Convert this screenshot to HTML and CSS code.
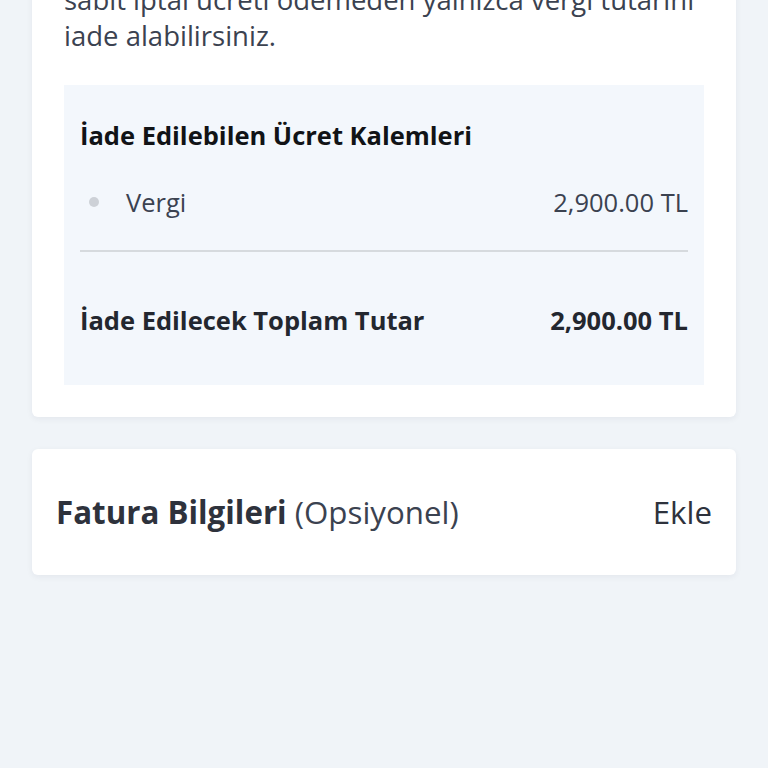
FILE: index.html
```html
<!DOCTYPE html>
<html lang="tr">
<head>
<meta charset="utf-8">
<link rel="stylesheet" href="styles.css">
</head>
<body>
<div class="page">
  <section class="card refund">
    <p class="intro">sabit iptal ücreti ödemeden yalnızca vergi tutarını iade alabilirsiniz.</p>
    <div class="breakdown">
      <h3 class="bd-title">İade Edilebilen Ücret Kalemleri</h3>
      <div class="item">
        <span class="bullet"></span>
        <span class="item-name">Vergi</span>
        <span class="item-amount">2,900.00 TL</span>
      </div>
      <div class="divider"></div>
      <div class="total">
        <span class="total-label">İade Edilecek Toplam Tutar</span>
        <span class="total-amount">2,900.00 TL</span>
      </div>
    </div>
  </section>
  <section class="card invoice">
    <div class="inv-title"><strong>Fatura Bilgileri</strong> <span class="opt">(Opsiyonel)</span></div>
    <div class="inv-action">Ekle</div>
  </section>
</div>
</body>
</html>
```
FILE: styles.css
```css
html, body {
  margin: 0;
  padding: 0;
  background: #f0f4f8;
  font-family: "Open Sans", "Noto Sans", sans-serif;
  height: 100%;
}
.page {
  padding: 0 32px;
  display: flex;
  flex-direction: column;
  gap: 32px;
}
.card {
  background: #fff;
  border-radius: 6px;
  box-shadow: 0 2px 6px rgba(30, 40, 60, 0.06);
}
.refund {
  margin-top: -62px;
  padding: 44px 32px 32px;
}
.intro {
  margin: 0 0 31px;
  font-size: 27.5px;
  line-height: 36px;
  color: #3b4250;
}
.breakdown {
  background: #f3f7fc;
  padding: 33px 16px 48px;
}
.bd-title {
  margin: 0;
  font-size: 25.5px;
  line-height: 34px;
  font-weight: 700;
  color: #111316;
}
.item {
  display: flex;
  align-items: center;
  margin-top: 33px;
  line-height: 34px;
  font-size: 25.5px;
  color: #3b4250;
}
.bullet {
  width: 10px;
  height: 10px;
  border-radius: 50%;
  background: #cdd1d7;
  margin: 0 27px 0 9px;
}
.item-name { flex: 1; }
.divider {
  height: 2px;
  background: #d6dade;
  margin-top: 31px;
}
.total {
  display: flex;
  justify-content: space-between;
  align-items: center;
  margin-top: 51px;
  line-height: 34px;
  font-size: 25.5px;
  font-weight: 700;
  color: #23272f;
}
.invoice {
  display: flex;
  justify-content: space-between;
  align-items: center;
  padding: 0 24px;
  height: 126px;
  font-size: 31.3px;
  color: #2e323c;
}
.inv-title strong { font-weight: 700; }
.opt { font-weight: 400; color: #3b4250; }
.inv-action { font-weight: 400; color: #2e323c; }
```
